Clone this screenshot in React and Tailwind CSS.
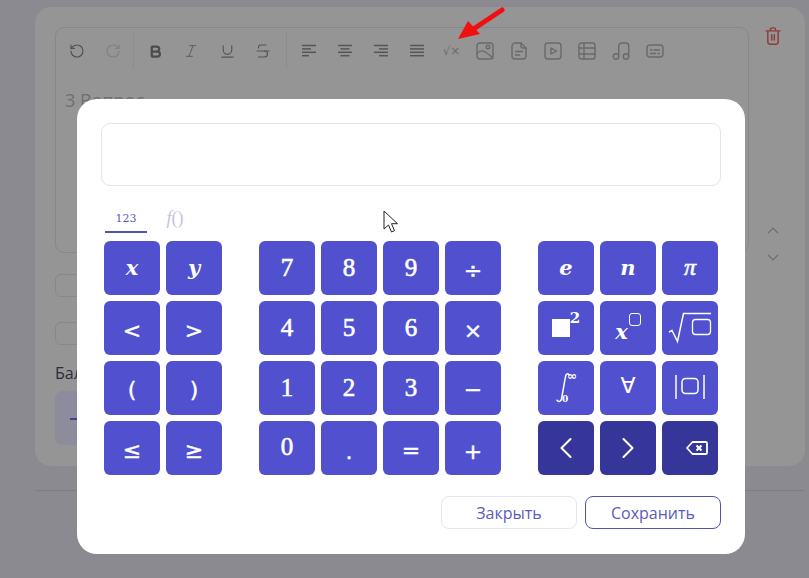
import React from "react";
import { RotateCcw, RotateCw, Bold, Italic, Underline, Strikethrough, ChevronUp, ChevronDown, ChevronLeft, ChevronRight } from "lucide-react";

const sans = "font-['Open_Sans','Noto_Sans',sans-serif]";

const Lines = ({ widths, align }) => (
  <svg width="16" height="14" viewBox="0 0 16 14" stroke="#555555" strokeWidth="1.5" fill="none">
    {widths.map((w, i) => {
      const x = align === "l" ? 1 : align === "r" ? 15 - w : (16 - w) / 2;
      return <line key={i} x1={x} x2={x + w} y1={1.5 + i * 3.4} y2={1.5 + i * 3.4} />;
    })}
  </svg>
);

const Ic = ({ children, w = "w-[34px]" }) => (
  <div className={`${w} h-full flex items-center justify-center shrink-0`}>{children}</div>
);

const stroke = { fill: "none", stroke: "#6a6a6a", strokeWidth: 1.4, strokeLinecap: "round", strokeLinejoin: "round" };

const Toolbar = () => (
  <div className="flex items-center h-[46px] pl-[3px]">
    <Ic w="w-9"><RotateCcw size={16} color="#505050" strokeWidth={1.7} /></Ic>
    <Ic w="w-9"><RotateCw size={16} color="#808080" strokeWidth={1.7} /></Ic>
    <div className="w-px h-[36px] bg-[#8d8d8d] ml-[2px] mr-[3px] shrink-0" />
    <Ic w="w-9"><Bold size={15} color="#4c4c4c" strokeWidth={3.6} /></Ic>
    <Ic w="w-9"><Italic size={16} color="#5a5a5a" strokeWidth={1.4} /></Ic>
    <Ic w="w-9"><Underline size={17} color="#555555" strokeWidth={1.6} /></Ic>
    <Ic w="w-9"><Strikethrough size={18} color="#555555" strokeWidth={1.6} /></Ic>
    <div className="w-px h-[36px] bg-[#8d8d8d] ml-[5px] mr-[4px] shrink-0" />
    <Ic w="w-9"><Lines align="l" widths={[14, 9, 14, 7]} /></Ic>
    <Ic w="w-9"><Lines align="c" widths={[14, 9, 14, 9]} /></Ic>
    <Ic w="w-9"><Lines align="r" widths={[14, 9, 14, 9]} /></Ic>
    <Ic w="w-9"><Lines align="l" widths={[14, 14, 14, 14]} /></Ic>
    <Ic w="w-[33px]">
      <div className="font-['DejaVu_Sans',sans-serif] text-[12px] leading-none text-[#6a6a6a]">√×</div>
    </Ic>
    <Ic>
      <svg width="18" height="18" viewBox="0 0 18 18" {...stroke}>
        <rect x="1" y="1" width="16" height="16" rx="3" />
        <circle cx="12" cy="5" r="1.8" />
        <path d="M1 11.5 C5 7 8 8 17 16" />
      </svg>
    </Ic>
    <Ic>
      <svg width="16" height="18" viewBox="0 0 16 18" {...stroke}>
        <path d="M4 1h6l5 5v8a3 3 0 0 1-3 3H4a3 3 0 0 1-3-3V4a3 3 0 0 1 3-3z" />
        <path d="M10 1v3a2 2 0 0 0 2 2h3M4.500 9.500h7M4.500 13h4" />
      </svg>
    </Ic>
    <Ic>
      <svg width="18" height="18" viewBox="0 0 18 18" {...stroke}>
        <rect x="1" y="1" width="16" height="16" rx="3" />
        <path d="M7 6l5.500 3L7 12z" />
      </svg>
    </Ic>
    <Ic>
      <svg width="18" height="18" viewBox="0 0 18 18" {...stroke}>
        <rect x="1" y="1" width="16" height="16" rx="2.500" />
        <path d="M1 6h16M1 12h16M6 1v16" />
      </svg>
    </Ic>
    <Ic>
      <svg width="18" height="18" viewBox="0 0 18 18" {...stroke}>
        <circle cx="4" cy="14.500" r="2.700" />
        <circle cx="14" cy="14.500" r="2.700" />
        <path d="M6.700 14.500V4a3 3 0 0 1 3-3h4a3 3 0 0 1 3 3v10.500" />
      </svg>
    </Ic>
    <Ic>
      <svg width="18" height="14" viewBox="0 0 18 14" {...stroke}>
        <rect x="1" y="1" width="16" height="12" rx="3" />
        <path d="M4.500 6h1.500M8 6h5.500M4.500 9.500h5M12 9.500h1.500" />
      </svg>
    </Ic>
  </div>
);

const serif = "font-['DejaVu_Serif',serif]";
const lib = "font-['Liberation_Serif',serif]";
const dj = "font-['DejaVu_Sans',sans-serif]";

const Key = ({ children, dark, cls = "" }) => (
  <div className={`relative w-[56px] h-[54px] rounded-[6px] flex items-center justify-center text-white select-none ${dark ? "bg-[#35359a]" : "bg-[#5151d0]"} ${cls}`}>
    {children}
  </div>
);

const D = ({ children, y = "-translate-y-[1px]" }) => (
  <span className={`${lib} text-[25px] leading-none [-webkit-text-stroke:0.6px_white] ${y}`}>{children}</span>
);
const V = ({ children, cls = "-translate-y-[1px]" }) => (
  <span className={`${serif} text-[21px] leading-none font-bold italic ${cls}`}>{children}</span>
);
const Op = ({ children, cls = "translate-y-[3px]" }) => (
  <span className={`${dj} text-[22px] leading-none [-webkit-text-stroke:0.4px_white] ${cls}`}>{children}</span>
);

const Grid = ({ cols, children, cls = "" }) => (
  <div className={`grid gap-x-[6px] gap-y-[6px] ${cols} ${cls}`}>{children}</div>
);

const Modal = () => (
  <div className="absolute left-[77px] top-[99px] w-[668px] h-[455px] bg-white rounded-[20px] px-[24px] pt-[24px]">
    <div className="w-[620px] h-[63px] border border-[#e3e3ec] rounded-[9px] bg-white" />
    <div className="flex items-start h-[47px] pl-[4px] mt-[20px]">
      <div className="w-[42px] h-[27px] border-b-2 border-[#5151b8] flex items-center justify-center">
        <span className={`${serif} text-[11px] leading-none text-[#5a5ac0]`}>123</span>
      </div>
      <div className="w-[56px] h-[23px] flex items-center justify-center font-['Liberation_Serif',serif] text-[18px] leading-none text-[#c4c4de]">
        <span className="italic">f</span>()
      </div>
    </div>
    <div className="flex items-start -mt-[12px] pl-[3px]">
      <Grid cols="grid-cols-[56px_56px]" cls="mr-[37px]">
        <Key><V>x</V></Key>
        <Key><V>y</V></Key>
        <Key><Op cls="translate-y-[3px]">&lt;</Op></Key>
        <Key><Op cls="translate-y-[3px]">&gt;</Op></Key>
        <Key><Op cls="translate-y-[2px]">(</Op></Key>
        <Key><Op cls="translate-y-[2px]">)</Op></Key>
        <Key><Op>≤</Op></Key>
        <Key><Op>≥</Op></Key>
      </Grid>
      <Grid cols="grid-cols-[56px_56px_56px_56px]" cls="mr-[37px]">
        <Key><D>7</D></Key>
        <Key><D>8</D></Key>
        <Key><D>9</D></Key>
        <Key><Op>÷</Op></Key>
        <Key><D>4</D></Key>
        <Key><D>5</D></Key>
        <Key><D>6</D></Key>
        <Key><Op>×</Op></Key>
        <Key><D>1</D></Key>
        <Key><D>2</D></Key>
        <Key><D>3</D></Key>
        <Key><Op cls="translate-y-[2px]">−</Op></Key>
        <Key><D y="-translate-y-[2px]">0</D></Key>
        <Key><Op cls="translate-y-[4px]">.</Op></Key>
        <Key><Op cls="translate-y-[3px]">=</Op></Key>
        <Key><Op cls="translate-y-[4px]">+</Op></Key>
      </Grid>
      <Grid cols="grid-cols-[56px_56px_56px]">
        <Key><V>e</V></Key>
        <Key><V>n</V></Key>
        <Key><span className={`${lib} text-[24px] leading-none italic [-webkit-text-stroke:0.6px_white] -translate-y-[1px]`}>π</span></Key>
        <Key>
          <span className="inline-block w-[18px] h-[18px] bg-white mt-[-1px]" />
          <span className={`${serif} text-[15px] font-bold leading-none self-start mt-[10px]`}>2</span>
        </Key>
        <Key>
          <V cls="mt-[7px]">x</V>
          <span className="self-start mt-[12px] ml-[1px] w-[12px] h-[13px] border border-white rounded-[3px] shrink-0" />
        </Key>
        <Key>
          <svg width="44" height="32" viewBox="0 0 44 32" fill="none" stroke="white">
            <path d="M1 20l3-1.500 5.500 11L15.500 1.500H43" strokeWidth="1.500" />
            <rect x="24.500" y="7.500" width="18" height="15" rx="3" strokeWidth="1.300" />
          </svg>
        </Key>
        <Key>
          <svg width="16" height="32" viewBox="0 0 16 32" fill="none" stroke="white" strokeWidth="1.500" strokeLinecap="round" className="absolute left-[17px] top-[11px]">
            <path d="M14 3c-1-2-3-1.500-3.500 1.500L6.500 27c-.5 3-3.500 3-4.500 1.200" />
          </svg>
          <span className={`absolute left-[29px] top-[9px] ${dj} font-bold text-[12px] leading-none`}>∞</span>
          <span className={`absolute left-[24px] top-[34px] ${serif} font-bold text-[9px] leading-none`}>0</span>
        </Key>
        <Key><span className={`${dj} text-[22px] leading-none -translate-y-[2px]`}>∀</span></Key>
        <Key>
          <svg width="32" height="26" viewBox="0 0 32 26" fill="none" stroke="white" strokeWidth="1.500" className="-translate-y-[1px]">
            <path d="M2 1v24M30 1v24" />
            <rect x="8" y="4.500" width="16" height="15" rx="3.500" />
          </svg>
        </Key>
        <Key dark><ChevronLeft size={36} strokeWidth={1.400} /></Key>
        <Key dark><ChevronRight size={36} strokeWidth={1.400} /></Key>
        <Key dark>
          <svg width="22" height="14" viewBox="0 0 22 14" className="translate-x-[7px]" fill="none" stroke="white" strokeWidth="1.800">
            <path d="M6.500 1H20a1 1 0 0 1 1 1v10a1 1 0 0 1-1 1H6.500L1 7z" strokeLinejoin="round" />
            <path d="M10.500 4.500l5 5M15.500 4.500l-5 5" strokeWidth="2" />
          </svg>
        </Key>
      </Grid>
    </div>
    <div className={`flex justify-end gap-2 mt-[21px] ${sans}`}>
      <div className="w-[136px] h-[33px] rounded-[8px] border border-[#e6e6f2] flex items-center justify-center text-[16px] text-[#5b5bbd]">Закрыть</div>
      <div className="w-[136px] h-[33px] rounded-[8px] border border-[#5151b0] flex items-center justify-center text-[16px] text-[#5b5bbd]">Сохранить</div>
    </div>
  </div>
);

const Page = () => (
  <div className={`pt-[7px] pl-[35px] ${sans}`}>
    <div className="w-[770px] h-[459px] bg-[#959595] rounded-[16px] pl-[20px] pt-[20px]">
      <div className="flex items-start">
        <div className="w-[694px] h-[226px] border border-[#888888] rounded-[9px]">
          <Toolbar />
          <div className="pl-[9px] pt-[14px] text-[18px] leading-[24px] text-[#6f6f6f]">3 Вопрос</div>
        </div>
        <div className="w-[48px] h-[240px] flex flex-col items-center">
          <svg width="18" height="21" viewBox="0 0 18 21" fill="none" stroke="#8e3b3b" strokeWidth="1.700" strokeLinecap="round" strokeLinejoin="round">
            <path d="M1 4.500h16M6 4.500V3a2 2 0 0 1 2-2h2a2 2 0 0 1 2 2v1.500M3 4.500V17a3 3 0 0 0 3 3h6a3 3 0 0 0 3-3V4.500M7.500 9v6M10.500 9v6" />
          </svg>
          <ChevronUp size={22} color="#6c6c6c" strokeWidth={1.500} className="mt-[176px]" />
          <ChevronDown size={22} color="#6c6c6c" strokeWidth={1.500} className="mt-[8px]" />
        </div>
      </div>
      <div className="w-[70px] h-[23px] border border-[#888888] rounded-[6px] mt-[7px]" />
      <div className="w-[70px] h-[23px] border border-[#888888] rounded-[6px] mt-[25px]" />
      <div className="mt-[17px] text-[16px] leading-[22px] text-[#2c2c3a]">Балл</div>
      <div className="w-[120px] h-[54px] mt-[7px] rounded-[8px] bg-[#8c8c9c] pl-[15px] pt-[19px]">
        <div className="w-[8px] h-[2px] mt-[8px] bg-[#3f3f98]" />
      </div>
    </div>
    <div className="w-[770px] h-px bg-[#7d7d83] mt-[24px]" />
  </div>
);

export default function App() {
  return (
    <div className="relative w-[809px] h-[578px] overflow-hidden bg-[#8a8a90]">
      <Page />
      <svg className="absolute left-[456px] top-[6px]" width="50" height="38" viewBox="0 0 50 38">
        <path d="M46 4 L16 24" stroke="#f01010" strokeWidth="5" strokeLinecap="round" />
        <path d="M2 33 L12 15 L24 28 Z" fill="#f01010" />
      </svg>
      <Modal />
      <svg className="absolute left-[383px] top-[210px]" width="17" height="24" viewBox="0 0 17 24">
        <path d="M1 1v18l4.500-4 3 7 3-1.300-3-7h6z" fill="white" stroke="#222" strokeWidth="1" strokeLinejoin="round" />
      </svg>
    </div>
  );
}
